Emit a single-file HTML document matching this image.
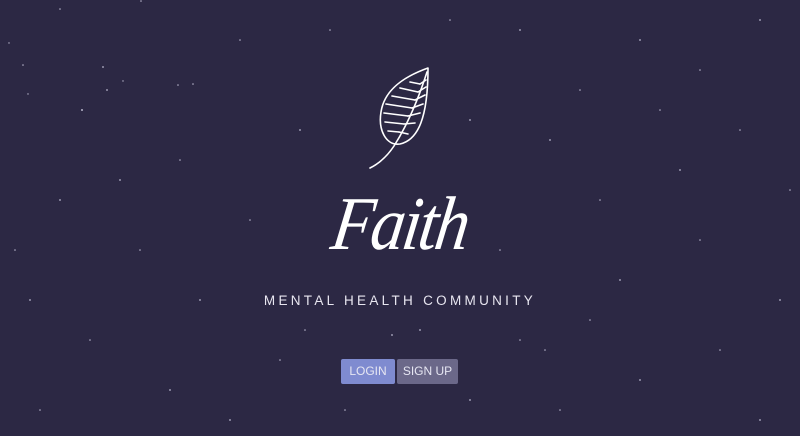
<!DOCTYPE html>
<html><head><meta charset="utf-8"><style>
html,body{margin:0;padding:0}
body{width:800px;height:436px;background:#2c2844;position:relative;overflow:hidden;font-family:"Liberation Sans",sans-serif}
.faith{position:absolute;left:0;width:800px;top:176px;text-align:center;color:#fff;font-family:"Liberation Serif","DejaVu Serif",serif;font-style:italic;font-size:76px;line-height:96px;letter-spacing:-3px;transform:skewX(-8deg) scaleX(0.9)}
.tag{position:absolute;left:0;width:800px;top:292px;text-align:center;color:#e8e6f0;font-size:13.5px;letter-spacing:3.3px;line-height:18px}
.btn{position:absolute;top:359px;height:25px;line-height:25px;text-align:center;color:#e6e6f2;font-size:12px;border-radius:2px}
</style></head><body>
<svg width="800" height="436" style="position:absolute;left:0;top:0">
<g fill="#b8b6cc">
<circle cx="60" cy="9" r="0.8"/><circle cx="103" cy="67" r="0.9"/><circle cx="107" cy="90" r="0.9"/><circle cx="123" cy="81" r="0.7"/><circle cx="23" cy="65" r="0.8"/><circle cx="141" cy="1" r="0.8"/><circle cx="178" cy="85" r="0.8"/><circle cx="193" cy="84" r="0.8"/><circle cx="82" cy="110" r="1"/><circle cx="28" cy="94" r="0.7"/><circle cx="9" cy="43" r="0.7"/>
<circle cx="240" cy="40" r="0.8"/><circle cx="300" cy="130" r="0.9"/><circle cx="180" cy="160" r="0.8"/><circle cx="60" cy="200" r="0.9"/><circle cx="140" cy="250" r="0.8"/><circle cx="30" cy="300" r="0.9"/><circle cx="90" cy="340" r="0.8"/><circle cx="200" cy="300" r="0.9"/><circle cx="250" cy="220" r="0.8"/><circle cx="170" cy="390" r="0.9"/><circle cx="40" cy="410" r="0.8"/><circle cx="230" cy="420" r="0.9"/><circle cx="280" cy="360" r="0.8"/><circle cx="120" cy="180" r="0.9"/><circle cx="15" cy="250" r="0.8"/>
<circle cx="520" cy="30" r="0.9"/><circle cx="580" cy="90" r="0.8"/><circle cx="640" cy="40" r="0.9"/><circle cx="700" cy="70" r="0.8"/><circle cx="760" cy="20" r="0.9"/><circle cx="740" cy="130" r="0.8"/><circle cx="680" cy="170" r="0.9"/><circle cx="600" cy="200" r="0.8"/><circle cx="550" cy="140" r="0.9"/><circle cx="500" cy="250" r="0.8"/><circle cx="620" cy="280" r="0.9"/><circle cx="700" cy="240" r="0.8"/><circle cx="780" cy="300" r="0.9"/><circle cx="720" cy="350" r="0.8"/><circle cx="640" cy="380" r="0.9"/><circle cx="560" cy="410" r="0.8"/><circle cx="760" cy="420" r="0.9"/><circle cx="520" cy="340" r="0.8"/><circle cx="590" cy="320" r="0.8"/><circle cx="450" cy="20" r="0.8"/><circle cx="470" cy="120" r="0.9"/><circle cx="330" cy="30" r="0.8"/><circle cx="420" cy="330" r="0.9"/><circle cx="392" cy="335" r="0.9"/><circle cx="345" cy="410" r="0.8"/><circle cx="470" cy="400" r="0.9"/><circle cx="305" cy="330" r="0.8"/><circle cx="545" cy="350" r="0.8"/><circle cx="660" cy="110" r="0.8"/><circle cx="790" cy="190" r="0.8"/>
</g>
<g fill="none" stroke="#fff" stroke-width="1.6" stroke-linecap="round" stroke-linejoin="round">
<path d="M428 68 C400 78 384 92 381 112 C378 130 386 146 400 144 C418 140 428 118 428 68 Z"/>
<path d="M427 72 C418 100 408 124 394 146 C386 158 378 164 370 168"/>
<path d="M420 84 L410 82 M418 92 L400 88 M415 100 L392 96 M412 108 L386 104 M408 116 L384 113 M404 124 L385 122 M399 132 L388 131"/>
<path d="M420 84 L426 80 M418 92 L426 87 M415 100 L425 95 M412 108 L423 104 M408 116 L420 113 M404 124 L415 123 M399 132 L408 134"/>
</g>
</svg>
<div class="faith">Faith</div>
<div class="tag">MENTAL HEALTH COMMUNITY</div>
<div class="btn" style="left:341px;width:54px;background:#7f8bd0">LOGIN</div>
<div class="btn" style="left:397px;width:61px;background:#6b6889">SIGN UP</div>
</body></html>
